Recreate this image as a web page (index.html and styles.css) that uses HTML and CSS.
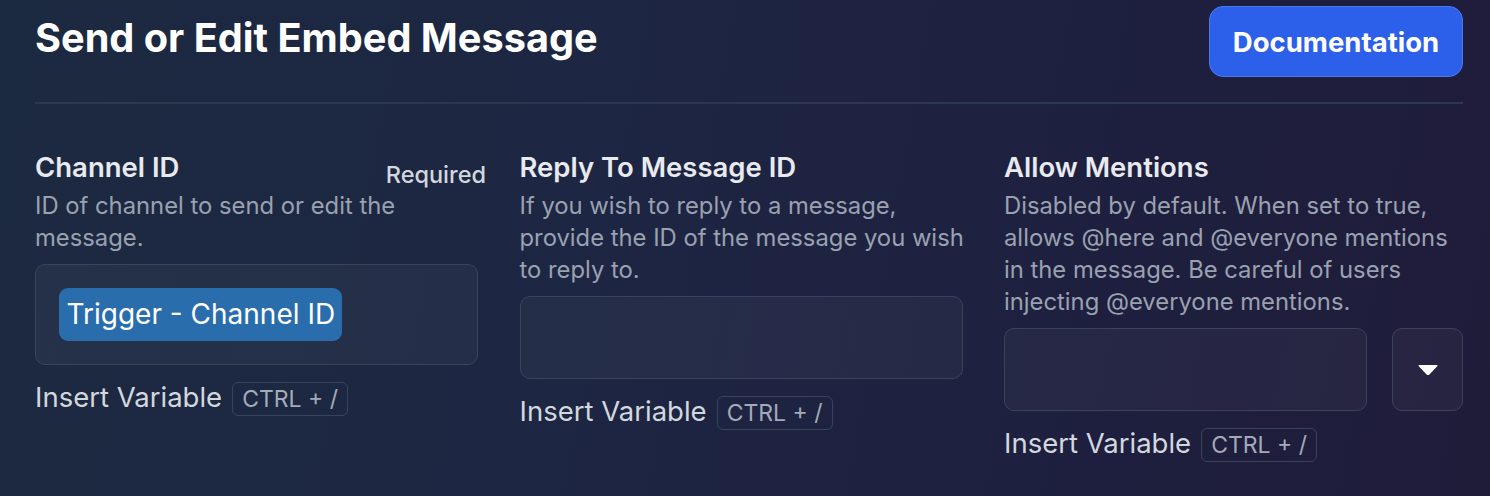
FILE: index.html
```html
<!DOCTYPE html>
<html lang="en">
<head>
    <meta charset="UTF-8">
    <meta name="viewport" content="width=device-width, initial-scale=1.0">
    <title>Send or Edit Embed Message</title>
    <link rel="stylesheet" href="styles.css">
</head>
<body>
    <div class="page">
        <div class="header">
            <h1>Send or Edit Embed Message</h1>
            <button class="doc-btn">Documentation</button>
        </div>

        <div class="fields">
            <div class="field">
                <div class="field-head">
                    <span class="label">Channel ID</span>
                    <span class="required">Required</span>
                </div>
                <p class="desc">ID of channel to send or edit the message.</p>
                <div class="input input-tall">
                    <span class="chip">Trigger - Channel ID</span>
                </div>
                <div class="insert">Insert Variable <kbd>CTRL + /</kbd></div>
            </div>

            <div class="field">
                <div class="field-head">
                    <span class="label">Reply To Message ID</span>
                </div>
                <p class="desc">If you wish to reply to a message, provide the ID of the message you wish to reply to.</p>
                <div class="input"></div>
                <div class="insert">Insert Variable <kbd>CTRL + /</kbd></div>
            </div>

            <div class="field field-wide">
                <div class="field-head">
                    <span class="label">Allow Mentions</span>
                </div>
                <p class="desc">Disabled by default. When set to true, allows @here and @everyone mentions in the message. Be careful of users injecting @everyone mentions.</p>
                <div class="select-row">
                    <div class="input"></div>
                    <button class="drop-btn">
                        <svg width="22" height="12" viewBox="0 0 22 12">
                            <path d="M2.5 1 H19.5 Q21.5 1 20 2.6 L12.4 10.4 Q11 11.8 9.6 10.4 L2 2.6 Q0.5 1 2.5 1 Z" fill="#ffffff"/>
                        </svg>
                    </button>
                </div>
                <div class="insert">Insert Variable <kbd>CTRL + /</kbd></div>
            </div>
        </div>
    </div>
</body>
</html>
```

FILE: styles.css
```css
* {
    margin: 0;
    padding: 0;
    box-sizing: border-box;
    font-family: Inter, "Noto Sans", sans-serif;
}

html, body {
    height: 100%;
}

body {
    background: linear-gradient(100deg, #1c2a41 0%, #1d2542 45%, #1e1f3e 75%, #1f1c3a 100%);
    color: #e6e8ee;
    overflow: hidden;
}

.page {
    padding: 6px 27px 0 35px;
}

.header {
    display: flex;
    justify-content: space-between;
    align-items: center;
    padding-bottom: 25px;
    border-bottom: 2px solid #2c384e;
}

h1 {
    font-size: 39.7px;
    font-weight: 700;
    color: #ffffff;
    margin-top: -7px;
}

.doc-btn {
    width: 254px;
    height: 71px;
    background-color: #2c5fea;
    border: 1px solid #4a78f0;
    border-radius: 14px;
    color: #ffffff;
    font-size: 27.5px;
    font-weight: 700;
    cursor: pointer;
}

.fields {
    display: grid;
    grid-template-columns: 459px 459px 459px;
    column-gap: 25.5px;
    padding-top: 45px;
}

.field-head {
    display: flex;
    justify-content: space-between;
    align-items: flex-start;
    height: 36px;
    margin-right: 8px;
    margin-bottom: 5px;
}

.label {
    font-size: 27.5px;
    font-weight: 600;
    color: #e8eaef;
    line-height: 36px;
}

.required {
    font-size: 23.5px;
    font-weight: 500;
    color: #d3d7de;
    line-height: 30px;
    margin-top: 11px;
}

.desc {
    font-size: 23.8px;
    line-height: 32px;
    color: #9aa1b0;
    margin-bottom: 10px;
}

.input {
    height: 83px;
    margin-right: 16px;
    border: 1.5px solid #3a4458;
    border-radius: 10px;
    background-color: rgba(255, 255, 255, 0.04);
}

.input-tall {
    height: 101px;
    padding: 22.5px 0 0 22.5px;
}

.chip {
    display: inline-block;
    background-color: #2a6dac;
    color: #ffffff;
    font-size: 28px;
    line-height: 53px;
    height: 53px;
    padding: 0 7px 0 8px;
    border-radius: 9px;
}

.select-row {
    display: flex;
    gap: 25px;
}

.select-row .input {
    flex: 1;
    margin-right: 0;
}

.drop-btn {
    width: 71px;
    height: 83px;
    border: 1.5px solid #3a4458;
    border-radius: 10px;
    background-color: rgba(255, 255, 255, 0.04);
    display: flex;
    align-items: center;
    justify-content: center;
    cursor: pointer;
}

.insert {
    display: flex;
    align-items: baseline;
    gap: 10px;
    margin-top: 15px;
    font-size: 27.5px;
    line-height: 34px;
    color: #d3d7de;
}

kbd {
    font-family: Inter, "Noto Sans", sans-serif;
    font-size: 23px;
    color: #a3aab8;
    border: 1.5px solid #3a4458;
    border-radius: 6px;
    padding: 2px 9px;
    line-height: 28px;
}
```
